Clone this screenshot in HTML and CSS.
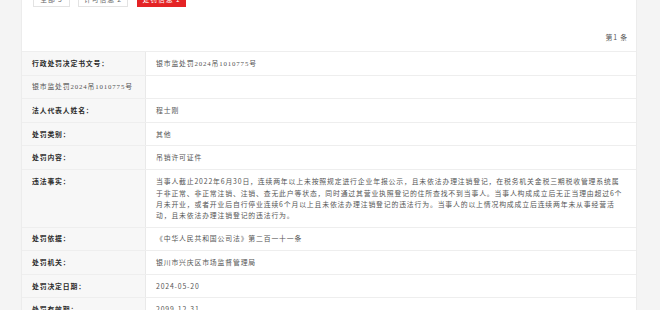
FILE: index.html
```html
<!DOCTYPE html>
<html lang="zh-CN">
<head>
<meta charset="utf-8">
<link rel="stylesheet" href="styles.css">
</head>
<body>
<div class="page">
  <div class="gutter"></div>
  <main class="panel">
    <div class="tabs">
      <span class="tab">全部 3</span>
      <span class="tab">许可信息 2</span>
      <span class="tab tab-active">处罚信息 1</span>
    </div>
    <div class="count">第1 条</div>
    <div class="table">
      <div class="row"><div class="label">行政处罚决定书文号：</div><div class="value serif">银市监处罚2024吊1010775号</div></div>
      <div class="row"><div class="label label-plain serif">银市监处罚2024吊1010775号</div><div class="value"></div></div>
      <div class="row"><div class="label">法人代表人姓名：</div><div class="value">程士刚</div></div>
      <div class="row"><div class="label">处罚类别：</div><div class="value">其他</div></div>
      <div class="row"><div class="label">处罚内容：</div><div class="value">吊销许可证件</div></div>
      <div class="row"><div class="label">违法事实：</div><div class="value value-long">当事人截止2022年6月30日，连续两年以上未按照规定进行企业年报公示，且未依法办理注销登记，在税务机关金税三期税收管理系统属于非正常、非正常注销、注销、查无此户等状态，同时通过其营业执照登记的住所查找不到当事人。当事人构成成立后无正当理由超过6个月未开业，或者开业后自行停业连续6个月以上且未依法办理注销登记的违法行为。当事人的以上情况构成成立后连续两年未从事经营活动，且未依法办理注销登记的违法行为。</div></div>
      <div class="row"><div class="label">处罚依据：</div><div class="value">《中华人民共和国公司法》第二百一十一条</div></div>
      <div class="row"><div class="label">处罚机关：</div><div class="value">银川市兴庆区市场监督管理局</div></div>
      <div class="row"><div class="label">处罚决定日期：</div><div class="value">2024-05-20</div></div>
      <div class="row"><div class="label">处罚有效期：</div><div class="value">2099-12-31</div></div>
    </div>
  </main>
  <div class="gutter-right"></div>
</div>
</body>
</html>
```

FILE: styles.css
```css
* { box-sizing: border-box; }
html, body { margin: 0; padding: 0; }
body {
  background: #f4f4f4;
  font-family: "Noto Sans CJK SC", "Noto Sans", sans-serif;
  font-size: 6.85px;
  letter-spacing: 0.85px;
  color: #555;
  overflow: hidden;
}
.page {
  display: flex;
  margin-top: -10px;
  min-height: 340px;
}
.gutter { width: 21px; flex: none; }
.gutter-right { flex: 1; }
.panel {
  width: 616px;
  flex: none;
  background: #fff;
  border-left: 1px solid #ececec;
  border-right: 1px solid #ececec;
}
.tabs {
  display: flex;
  padding-left: 11px;
  height: 17px;
}
.tab {
  display: flex;
  align-items: center;
  justify-content: center;
  height: 17px;
  padding: 0;
  border: 1px solid #e3e3e3;
  color: #666;
  white-space: nowrap;
  flex: none;
}
.tab:nth-child(1) { width: 37px; }
.tab:nth-child(2) { width: 50px; margin-left: 8px; }
.tab-active {
  width: 49px;
  margin-left: 9px;
  background: #e42325;
  border-color: #e42325;
  color: #fff;
}
.count {
  margin-top: 24px;
  text-align: right;
  padding-right: 8px;
  line-height: 12px;
  height: 12px;
  color: #555;
}
.table {
  margin-top: 8px;
  border-top: 1px solid #eeeeee;
}
.row {
  display: flex;
  border-bottom: 1px solid #eeeeee;
}
.label {
  width: 124px;
  flex: none;
  background: #f7f7f7;
  border-right: 1px solid #e9e9e9;
  padding: 5.75px 10px;
  line-height: 11.1px;
  font-weight: bold;
  color: #2b2b2b;
  white-space: nowrap;
}
.label-plain {
  font-weight: normal;
  color: #555;
}
.value {
  flex: 1;
  padding: 5.75px 13px 5.75px 10px;
  line-height: 11.1px;
  color: #555;
}
.value-long { padding-top: 6.5px; }
.serif {
  font-family: "Liberation Serif", "Noto Sans CJK SC", serif;
}
```
